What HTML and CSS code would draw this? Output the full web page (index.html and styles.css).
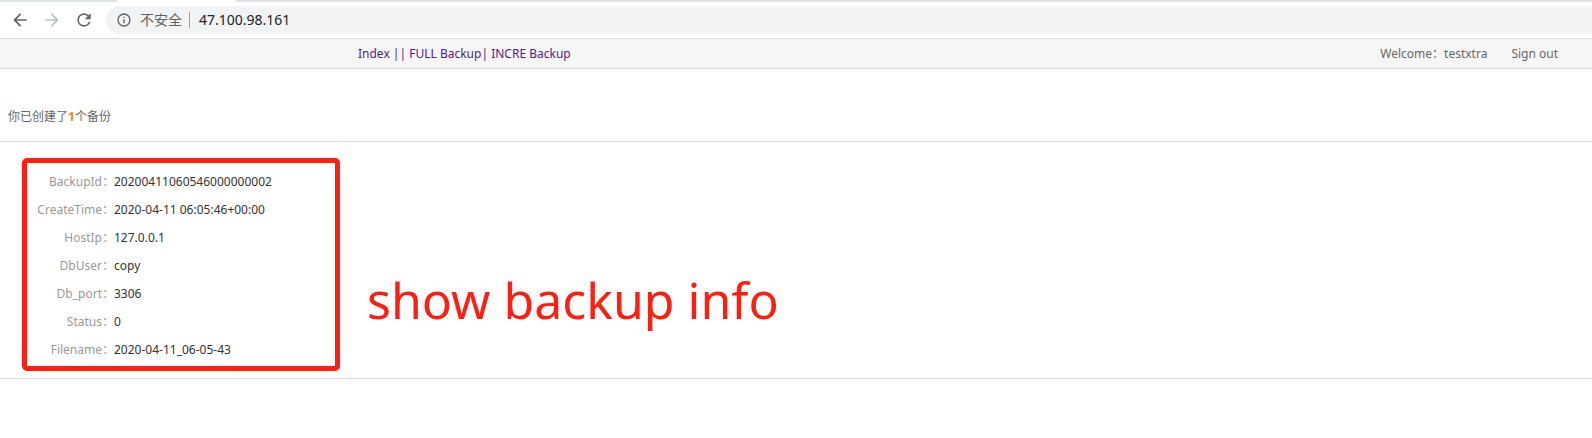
FILE: index.html
```html
<!DOCTYPE html>
<html lang="zh-CN">
<head>
<meta charset="utf-8">
<title>Backup</title>
<link rel="stylesheet" href="styles.css">
</head>
<body>
<div class="tabs"><div class="tab"></div></div>
<div class="toolbar">
  <button class="tool" aria-label="Back"><svg viewBox="0 0 24 24"><path d="M20 11H7.83l5.59-5.59L12 4l-8 8 8 8 1.41-1.41L7.83 13H20z"/></svg></button>
  <button class="tool tool-off" aria-label="Forward"><svg viewBox="0 0 24 24"><path d="M4 11h12.17l-5.59-5.59L12 4l8 8-8 8-1.41-1.41L16.17 13H4z"/></svg></button>
  <button class="tool" aria-label="Reload"><svg viewBox="0 0 24 24"><path d="M17.65 6.35A7.96 7.96 0 0 0 12 4a8 8 0 1 0 7.73 10h-2.08A6 6 0 1 1 12 6c1.66 0 3.14.69 4.22 1.78L13 11h7V4z"/></svg></button>
  <div class="address">
    <svg class="info" viewBox="0 0 24 24"><path d="M11 7h2v2h-2zm0 4h2v6h-2zm1-9a10 10 0 1 0 0 20 10 10 0 0 0 0-20zm0 18a8 8 0 1 1 0-16 8 8 0 0 1 0 16z"/></svg>
    <span class="insecure">不安全</span>
    <span class="url">47.100.98.161</span>
  </div>
</div>
<nav class="nav">
  <div class="links"><a href="#">Index ||</a> <a href="#">FULL Backup|</a> <a href="#">INCRE Backup</a></div>
  <div class="account"><span>Welcome：testxtra</span><a href="#">Sign out</a></div>
</nav>
<main>
  <p class="summary">你已创建了<b>1</b>个备份</p>
  <section class="record">
    <dl class="details">
      <dt>BackupId：</dt><dd>20200411060546000000002</dd>
      <dt>CreateTime：</dt><dd>2020-04-11 06:05:46+00:00</dd>
      <dt>HostIp：</dt><dd>127.0.0.1</dd>
      <dt>DbUser：</dt><dd>copy</dd>
      <dt>Db_port：</dt><dd>3306</dd>
      <dt>Status：</dt><dd>0</dd>
      <dt>Filename：</dt><dd>2020-04-11_06-05-43</dd>
    </dl>
    <p class="note">show backup info</p>
  </section>
</main>
</body>
</html>
```
FILE: styles.css
```css
* { box-sizing: border-box; }
body {
  margin: 0;
  background: #fff;
  color: #333;
  font: 12px/28px "Noto Sans", "Noto Sans CJK SC", sans-serif;
}
p, dl, dd { margin: 0; }
a { text-decoration: none; }

.tabs { height: 2px; padding-left: 117px; background: #dee1e6; }
.tab { width: 119px; height: 2px; background: #fff; }
.toolbar {
  display: flex;
  align-items: center;
  gap: 12px;
  height: 36px;
  padding-left: 10px;
}
.tool {
  display: flex;
  width: 20px;
  height: 20px;
  padding: 0;
  border: 0;
  background: none;
}
.tool svg { width: 20px; height: 20px; fill: #5f6368; }
.tool-off svg { fill: #bdc1c6; }
.address {
  display: flex;
  flex: 1;
  align-items: center;
  height: 28px;
  padding-left: 10px;
  border-radius: 14px 0 0 14px;
  background: #f1f3f4;
  font-size: 14px;
  line-height: 16px;
}
.info { width: 16px; height: 16px; margin-right: 8px; fill: #5f6368; }
.insecure { padding-right: 7px; border-right: 1px solid #9aa0a6; color: #5f6368; }
.url { padding-left: 9px; color: #202124; }

.nav {
  display: flex;
  justify-content: space-between;
  padding: 0 34px 0 358px;
  border: solid #dcdcdc;
  border-width: 1px 0;
  background: #f6f6f6;
  line-height: 29px;
}
.links a { color: #551a8b; }
.account { display: flex; gap: 24px; color: #666; }
.account a { color: inherit; }

.summary {
  padding: 34px 8px 10px;
  border-bottom: 1px solid #dcdcdc;
  color: #666;
}
.summary b { color: #ff8400; }
.record {
  display: flex;
  align-items: flex-end;
  gap: 27px;
  padding: 16px 22px 7px;
  border-bottom: 1px solid #dcdcdc;
}
.details {
  display: grid;
  grid-template-columns: 87px 1fr;
  width: 318px;
  padding: 5px 0 2px;
  border: 5px solid #ff1e10;
  border-radius: 5px;
  color: #333;
}
.details dt { color: #999; text-align: right; white-space: nowrap; }
.note { padding-bottom: 41px; color: #ff1e10; font-size: 50px; line-height: 60px; }
```
